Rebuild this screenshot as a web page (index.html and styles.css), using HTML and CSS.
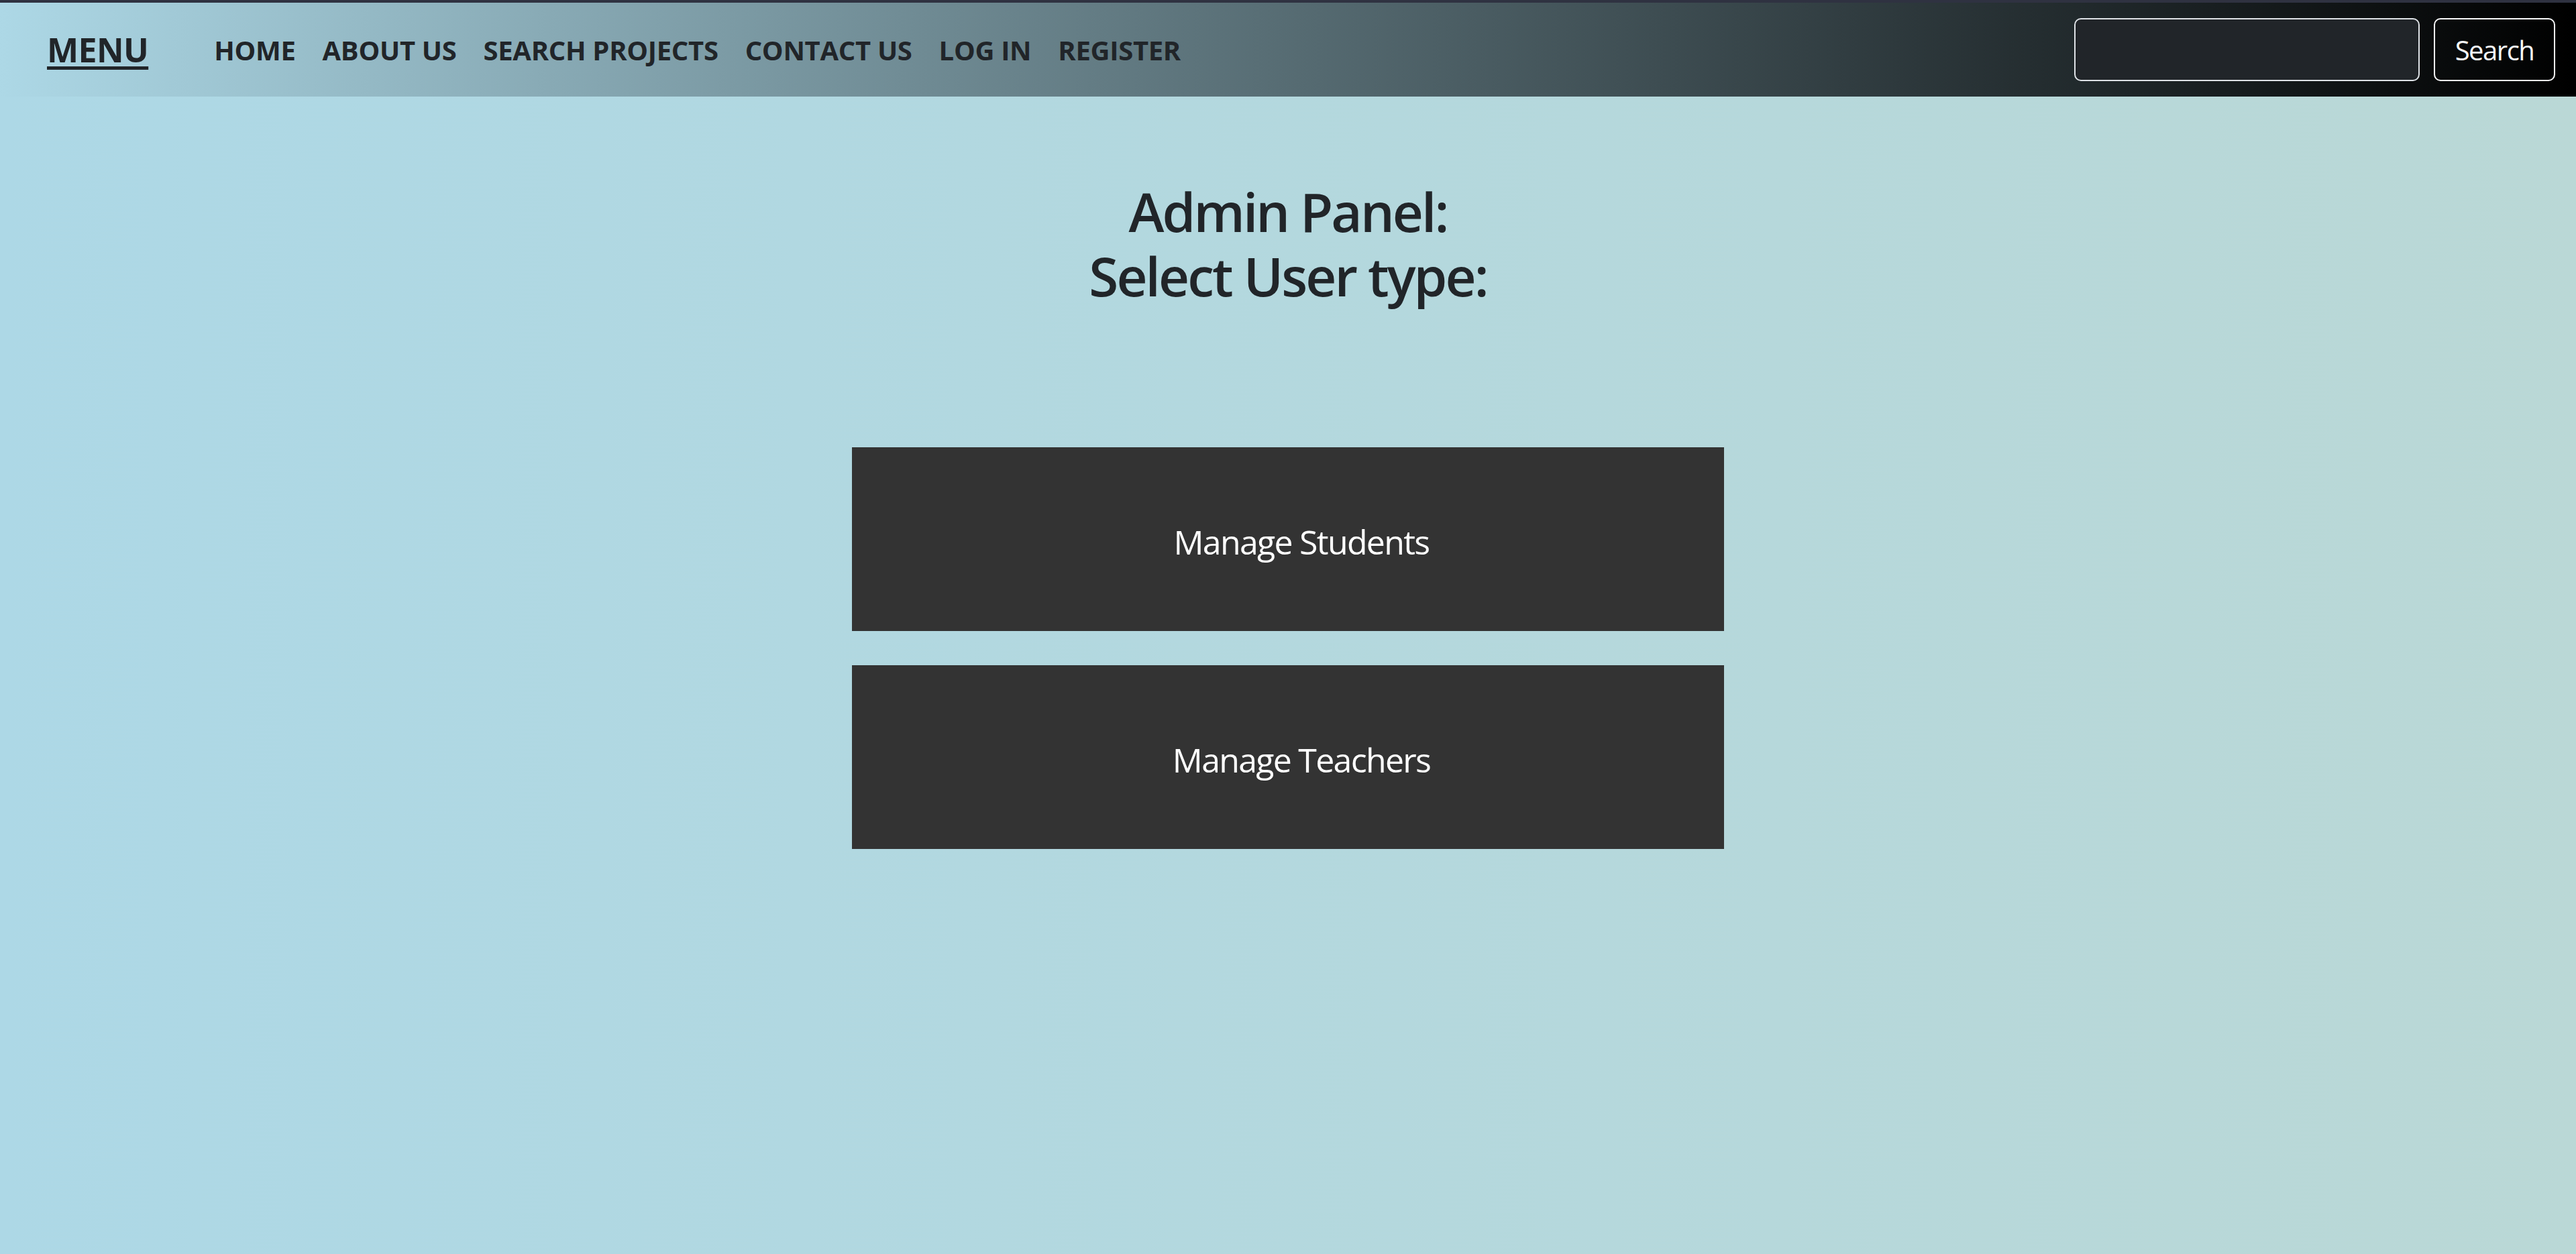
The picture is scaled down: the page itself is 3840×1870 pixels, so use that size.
FILE: index.html
```html
<!DOCTYPE html>
<html lang="en">
<head>
<meta charset="utf-8">
<title>Admin Panel</title>
<link rel="stylesheet" href="styles.css">
</head>
<body>
<nav class="navbar">
  <a class="brand" href="#">MENU</a>
  <ul class="nav-list">
    <li><a class="nav-link" href="#">HOME</a></li>
    <li><a class="nav-link" href="#">ABOUT US</a></li>
    <li><a class="nav-link" href="#">SEARCH PROJECTS</a></li>
    <li><a class="nav-link" href="#">CONTACT US</a></li>
    <li><a class="nav-link" href="#">LOG IN</a></li>
    <li><a class="nav-link" href="#">REGISTER</a></li>
  </ul>
  <form class="search-form">
    <input class="search-input" type="search" aria-label="Search">
    <button class="search-btn" type="button">Search</button>
  </form>
</nav>
<main class="main">
  <h2 class="title"><span class="title-line">Admin Panel:</span><span class="title-line">Select User type:</span></h2>
  <div class="choices">
    <button class="choice" type="button">Manage Students</button>
    <button class="choice" type="button">Manage Teachers</button>
  </div>
</main>
</body>
</html>
```
FILE: styles.css
```css
* { box-sizing: border-box; }
html, body { margin: 0; padding: 0; }
body {
  min-height: 1870px;
  font-family: "Open Sans", "Noto Sans", sans-serif;
  color: #212529;
  background: linear-gradient(to right, #add8e6, #bad8d6);
}
.navbar {
  display: flex;
  align-items: center;
  height: 144px;
  border-top: 4px solid #2f3241;
  padding: 0 31px 0 70px;
  background: linear-gradient(to right, #add8e6, #000000);
}
.brand {
  font-size: 50px;
  font-weight: 700;
  color: #212529;
  text-decoration: underline;
  text-decoration-thickness: 5px;
  text-underline-offset: 6px;
  letter-spacing: -0.6px;
  margin-right: 78px;
  line-height: 1;
}
.nav-list {
  display: flex;
  list-style: none;
  margin: 0;
  padding: 0;
}
.nav-link {
  display: block;
  padding: 10px 20px;
  font-size: 40px;
  font-weight: 700;
  color: #212529;
  text-decoration: none;
  letter-spacing: -0.3px;
}
.search-form {
  display: flex;
  margin-left: auto;
  gap: 21px;
}
.search-input {
  width: 515px;
  height: 94px;
  border: 2.5px solid #dee2e6;
  border-radius: 10px;
  background: #212529;
  color: #fff;
  font-size: 40px;
  padding: 0 30px;
}
.search-btn {
  width: 181px;
  height: 94px;
  border: 2.5px solid #f8f9fa;
  border-radius: 10px;
  background: transparent;
  color: #f8f9fa;
  font-family: inherit;
  font-size: 40px;
  letter-spacing: -1.5px;
  padding: 0;
}
.main {
  display: flex;
  flex-direction: column;
  align-items: center;
}
.title {
  margin: 123px 0 0;
  font-size: 80px;
  font-weight: 600;
  line-height: 96px;
  text-align: center;
  letter-spacing: -2.9px;
  display: flex;
  flex-direction: column;
  align-items: center;
}
.title-line {
  display: block;
}
.choices {
  display: flex;
  flex-direction: column;
  gap: 51px;
  margin-top: 208px;
}
.choice {
  width: 1300px;
  height: 274px;
  border: none;
  background: #333333;
  color: #ffffff;
  font-family: inherit;
  font-size: 50px;
  letter-spacing: -1.7px;
  padding: 8px 0 0 40px;
}
```
